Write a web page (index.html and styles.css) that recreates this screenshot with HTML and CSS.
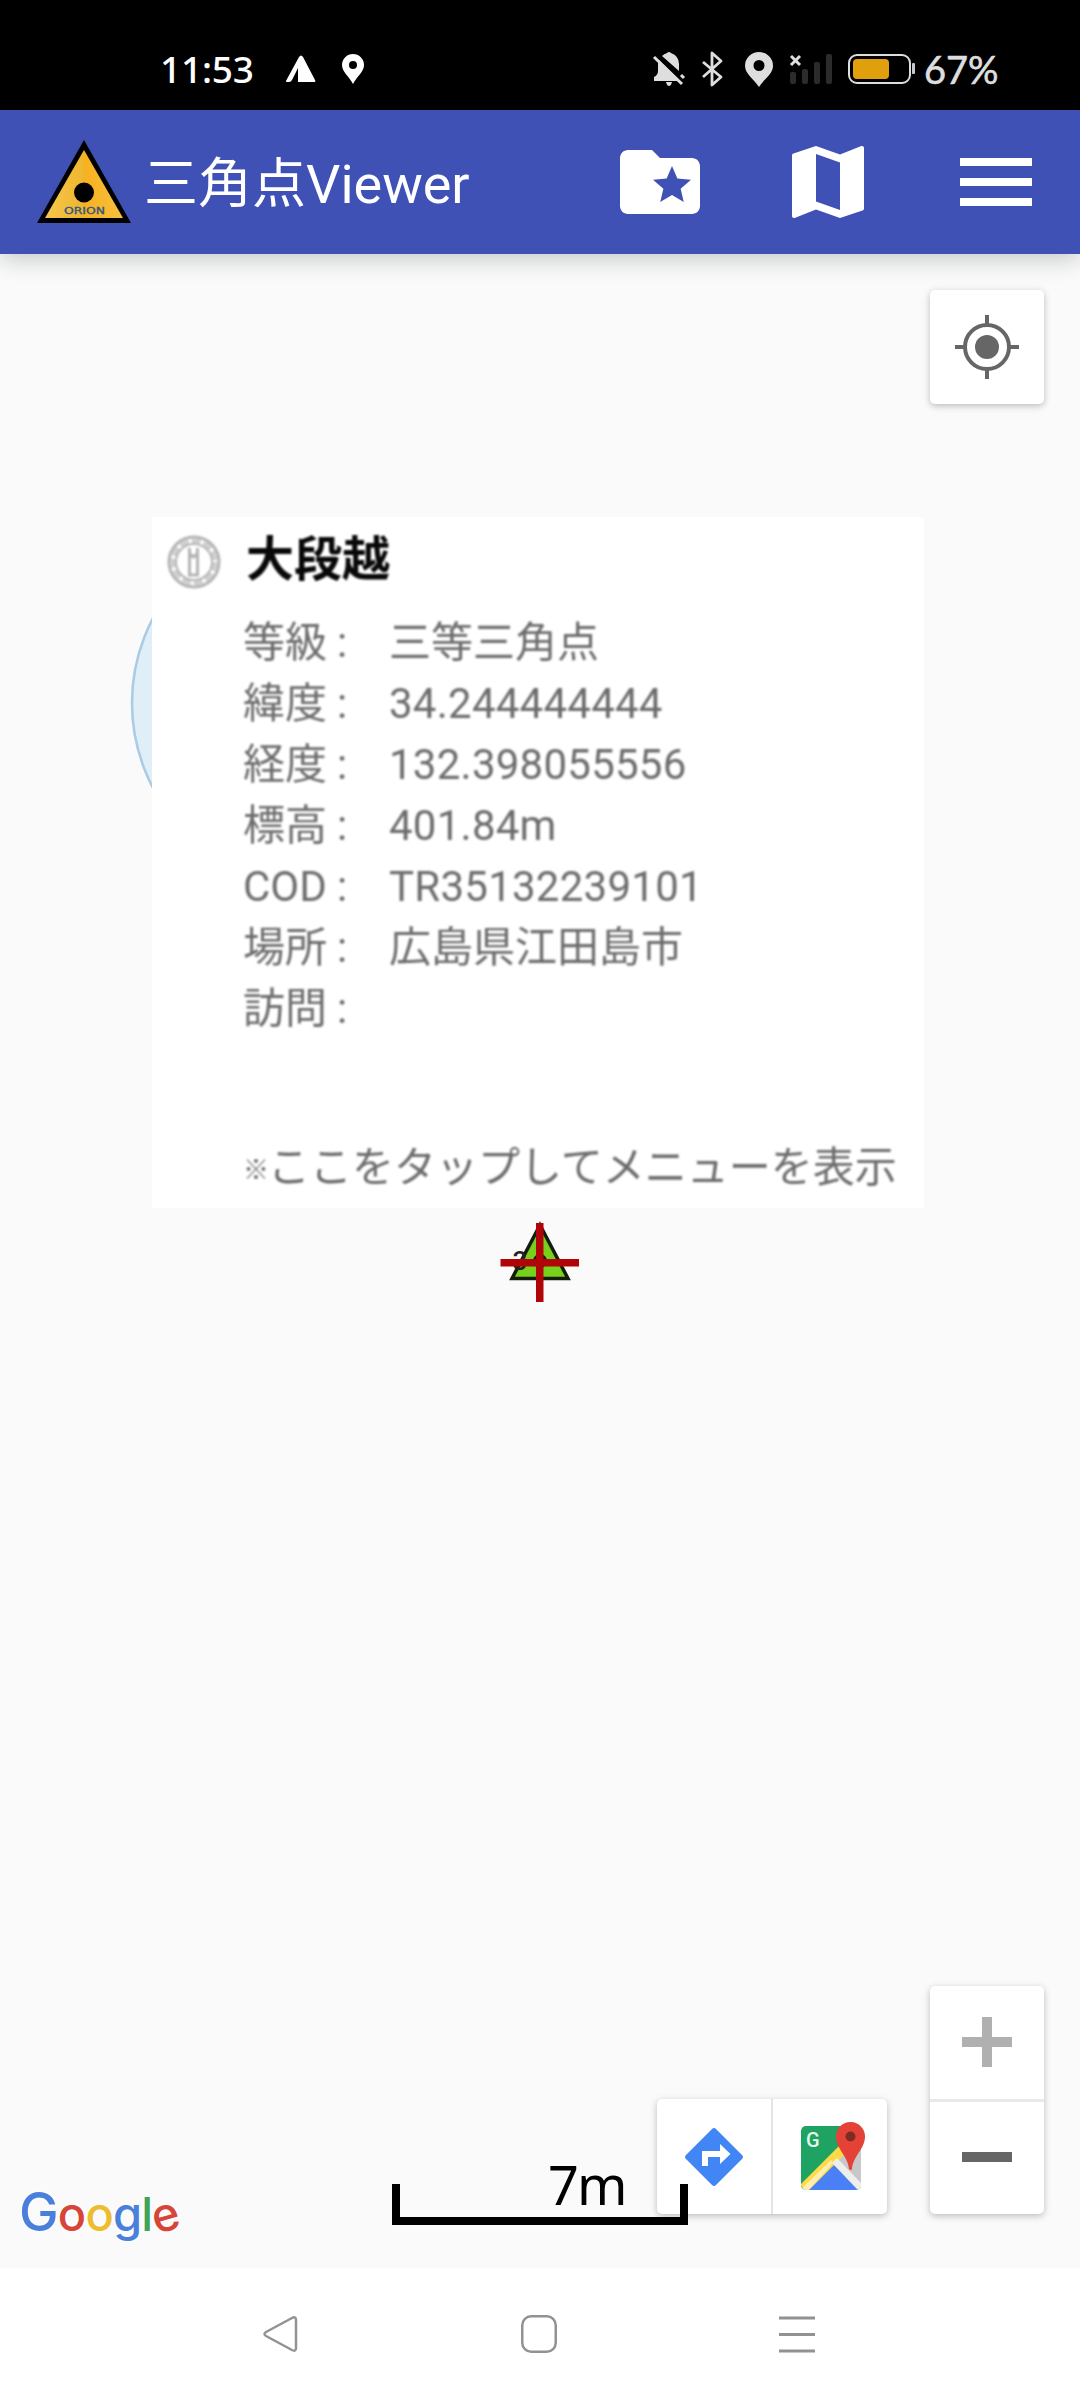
FILE: index.html
```html
<!DOCTYPE html>
<html lang="ja">
<head>
<meta charset="utf-8">
<title>三角点Viewer</title>
<link rel="stylesheet" href="styles.css">
</head>
<body>
<header class="status">
  <div class="status-side">
    <span class="clock">11:53</span>
    <svg class="ico-tent" width="32" height="28" viewBox="0 0 32 28"><path fill="#fff" d="M14 2Q16-1 18 2L30 25Q31 27 29 27H13V13L7 25Q6 27 4 27H2.500Q0 27 1.500 25Z"/></svg>
    <svg width="22" height="30" viewBox="0 0 22 30"><path fill="#fff" fill-rule="evenodd" d="M11 0A11 11 0 0 0 0 11C0 18 7 22 11 30C15 22 22 18 22 11A11 11 0 0 0 11 0ZM11 7a4 4 0 1 1 0 8a4 4 0 0 1 0-8Z"/></svg>
  </div>
  <div class="status-side">
    <svg width="32" height="34" viewBox="0 0 32 34"><path fill="#dedede" d="M13 30h6q-1 4-3 4t-3-4ZM1 29v-4q4-2 4-6v-7q0-2 1-4l21 21ZM9 4q2-2 5-3q2-2 4 0q8 3 8 11v7L9 4Z"/><path stroke="#000" stroke-width="3" d="M5 3l27 27"/><path stroke="#dedede" stroke-width="3" d="M1 5l28 27M28 23l3 3"/></svg>
    <svg class="ico-bt" width="22" height="34" viewBox="0 0 22 34"><path fill="none" stroke="#dedede" stroke-width="2.800" stroke-linejoin="round" d="M1 10l18 15l-9 8V1l9 8L1 25"/></svg>
    <svg class="ico-pin" width="28" height="35" viewBox="0 0 28 35"><path fill="#dedede" fill-rule="evenodd" d="M14 0A14 14 0 0 0 0 14C0 22 9 27 14 35C19 27 28 22 28 14A14 14 0 0 0 14 0ZM14 8a5.500 5.500 0 1 1 0 11a5.500 5.500 0 0 1 0-11Z"/></svg>
    <svg class="ico-signal" width="44" height="32" viewBox="0 0 44 32"><path stroke="#dedede" stroke-width="3" d="M2 3l9 9m0-9l-9 9"/><g fill="#2b2b2b"><rect x="1" y="19" width="6" height="12" rx="2"/><rect x="13" y="16" width="6" height="15" rx="2"/><rect x="25" y="9" width="6" height="22" rx="2"/><rect x="37" y="1" width="6" height="30" rx="2"/></g></svg>
    <svg class="ico-battery" width="68" height="32" viewBox="0 0 68 32"><rect x="1" y="2" width="61" height="28" rx="8" fill="none" stroke="#dedede" stroke-width="2"/><rect x="5" y="6" width="36" height="20" rx="4" fill="#e09f0c"/><rect x="64" y="10" width="3" height="11" rx="1" fill="#c8c8c8"/></svg>
    <span class="percent">67%</span>
  </div>
</header>

<nav class="appbar">
  <svg class="logo" width="96" height="84" viewBox="0 0 96 84">
    <defs><linearGradient id="gold"><stop offset="0" stop-color="#f6c64c"/><stop offset=".5" stop-color="#eeb62f"/><stop offset=".5" stop-color="#f8b01e"/><stop offset="1" stop-color="#f7c040"/></linearGradient></defs>
    <path d="M48 0L95 83H1Z"/><path fill="url(#gold)" d="M48 10L87 78H9Z"/>
    <circle cx="48" cy="52.500" r="10"/>
    <text class="logo-text" x="28" y="74" textLength="41" lengthAdjust="spacingAndGlyphs">ORION</text>
  </svg>
  <h1 class="title">三角点Viewer</h1>
  <div class="actions">
    <svg width="96" height="96" viewBox="0 0 24 24"><path fill="#fff" fill-rule="evenodd" d="M20 6h-8l-2-2H4c-1.100 0-2 .9-2 2v12c0 1.100.9 2 2 2h16c1.100 0 2-.9 2-2V8c0-1.100-.9-2-2-2zm-2.060 11L15 15.280 12.060 17l.78-3.330-2.590-2.240 3.410-.29L15 8l1.340 3.140 3.410.29-2.590 2.240.78 3.330z"/></svg>
    <svg width="96" height="96" viewBox="0 0 24 24"><path fill="#fff" fill-rule="evenodd" d="M20.500 3l-.16.030L15 5.100 9 3 3.360 4.900c-.21.070-.36.250-.36.480V20.500c0 .28.220.5.500.5l.16-.03L9 18.900l6 2.100 5.640-1.900c.21-.07.360-.25.360-.48V3.500c0-.28-.22-.5-.5-.5zM15 19l-6-2.110V5l6 2.110V19z"/></svg>
    <svg width="96" height="96" viewBox="0 0 24 24"><path fill="#fff" d="M3 18h18v-2H3v2zm0-5h18v-2H3v2zm0-7v2h18V6H3z"/></svg>
  </div>
</nav>

<main class="map">
  <svg class="accuracy" width="368" height="368" viewBox="0 0 368 368"><circle cx="184" cy="184" r="182" fill="#e0eef7" stroke="#a9cbe4" stroke-width="2.500"/></svg>

  <section class="popup">
    <svg class="medal" width="56" height="56" viewBox="0 0 56 56" fill="none" stroke="#b4b4b4"><circle cx="28" cy="28" r="25" stroke-width="3"/><circle cx="28" cy="28" r="21" stroke="#cfcfcf" stroke-width="5" stroke-dasharray="9 3"/><circle cx="28" cy="28" r="18" stroke-width="2"/><path stroke-width="3" d="M23.500 14v27h8V14M24 20l3.500 3l3.500-3"/></svg>
    <div class="info">
      <h2 class="name">大段越</h2>
      <dl class="facts">
        <dt>等級</dt><dd class="sep">:</dd><dd>三等三角点</dd>
        <dt>緯度</dt><dd class="sep">:</dd><dd class="num">34.244444444</dd>
        <dt>経度</dt><dd class="sep">:</dd><dd class="num">132.398055556</dd>
        <dt>標高</dt><dd class="sep">:</dd><dd class="num">401.84m</dd>
        <dt>COD</dt><dd class="sep">:</dd><dd class="num">TR35132239101</dd>
        <dt>場所</dt><dd class="sep">:</dd><dd>広島県江田島市</dd>
        <dt>訪問</dt><dd class="sep">:</dd><dd></dd>
      </dl>
      <p class="hint"><span class="kome">※</span>ここをタップしてメニューを表示</p>
    </div>
  </section>

  <svg class="marker" width="80" height="80" viewBox="0 0 80 80">
    <path d="M40 2L68 55.500H12Z" fill="#78d01c" stroke="#141c0c" stroke-width="3.500"/>
    <circle cx="40" cy="38" r="7" fill="#141c0c"/>
    <text class="marker-text" x="12.500" y="46.500">3</text>
    <path fill="#b00408" d="M36 0h7.500v79H36zM.5 36h78.500v7.500H.5z"/>
  </svg>

  <button class="card locate" aria-label="現在地"><svg width="64" height="64" viewBox="0 0 64 64"><circle cx="32" cy="32" r="12" fill="#666"/><circle cx="32" cy="32" r="22" fill="none" stroke="#666" stroke-width="4"/><path stroke="#666" stroke-width="4" d="M32 0v10M32 54v10M0 32h10M54 32h10"/></svg></button>

  <div class="card zoom">
    <button class="zoom-in" aria-label="拡大"><svg width="50" height="50" viewBox="0 0 50 50"><path fill="#b0b0b0" d="M20 0h10v20h20v10H30v20H20V30H0V20h20z"/></svg></button>
    <button class="zoom-out" aria-label="縮小"><svg width="50" height="50" viewBox="0 0 50 50"><path fill="#666" d="M0 20h50v10H0z"/></svg></button>
  </div>

  <div class="card tools">
    <button aria-label="経路"><svg width="60" height="60" viewBox="0 0 60 60"><path fill="#4285f4" d="M28 2Q30 0 32 2L58 28Q60 30 58 32L32 58Q30 60 28 58L2 32Q0 30 2 28Z"/><path fill="#fff" d="M18 39V24h18v-7l10.500 10L36 37v-7H24v9z"/></svg></button>
    <button aria-label="地図"><svg width="68" height="68" viewBox="0 0 68 68">
      <defs><clipPath id="tile"><rect x="4" y="8" width="60" height="64" rx="5"/></clipPath></defs>
      <g clip-path="url(#tile)"><path fill="#1ea362" d="M4 8h60v64H4z"/><path fill="#c8c8c8" d="M37 38L64 18v54H56z"/><path fill="#4a80f5" d="M6 75l28-31 30 31z"/><path fill="#ffda48" d="M3 67L42 28l6 8L10 74z"/><path fill="#fff" opacity=".55" d="M10 74L36 45l-2-3L4 71z"/><path fill="#eee" d="M35 45l5-5 27 28-5 5z"/></g>
      <path fill="#e44236" d="M54 4A14.500 14.500 0 0 0 39 18.500C39 31 51 38 52 51Q53.500 53 55 51C56 38 68 31 68 18.500A14.500 14.500 0 0 0 54 4Z"/><circle cx="53.500" cy="18.500" r="5" fill="#7f2b25"/>
      <text class="g-text" x="9" y="29">G</text></svg></button>
  </div>

  <div class="scale"><span>7m</span></div>
  <div class="google"><span class="b cap">G</span><span class="r">o</span><span class="y">o</span><span class="b">g</span><span class="g">l</span><span class="r tilt">e</span></div>
</main>

<footer class="navbar">
  <svg width="36" height="38" viewBox="0 0 36 38"><path fill="none" stroke="#929292" stroke-width="2.500" stroke-linejoin="round" d="M3 17L29 3Q33 1 33 5V33Q33 37 29 35L3 21Q0 19 3 17Z"/></svg>
  <svg width="36" height="38" viewBox="0 0 36 38"><rect x="1.250" y="1.250" width="33.500" height="35.500" rx="9" fill="none" stroke="#929292" stroke-width="2.500"/></svg>
  <svg width="36" height="38" viewBox="0 0 36 38"><path stroke="#929292" stroke-width="3" d="M0 3h36M0 19.500h36M0 36h36"/></svg>
</footer>
</body>
</html>
```
FILE: styles.css
```css
* { box-sizing: border-box; margin: 0; padding: 0; }

body {
  width: 1080px;
  height: 2400px;
  display: flex;
  flex-direction: column;
  overflow: hidden;
  font-family: Roboto, "Noto Sans CJK JP", sans-serif;
  background: #fafafa;
}

svg { display: block; flex: none; overflow: visible; }
button { border: 0; background: none; display: flex; align-items: center; justify-content: center; }

/* Status bar */
.status {
  height: 110px;
  flex: none;
  background: #000;
  display: flex;
  justify-content: space-between;
  padding: 28px 80px 0 160px;
}
.status-side { display: flex; align-items: center; height: 82px; }
.clock { width: 94px; color: #fff; font: 500 37px/40px "Noto Sans", sans-serif; letter-spacing: -.2px; }
.ico-tent { margin: 0 25px 0 31px; }
.percent { width: 76px; margin-left: 8px; color: #dedede; font: 400 38px/40px Lato, sans-serif; white-space: nowrap; -webkit-text-stroke: .6px #dedede; }
.ico-bt { margin-left: 17px; }
.ico-pin { margin-left: 21px; }
.ico-signal { margin-left: 16px; }
.ico-battery { margin-left: 15px; }

/* App bar */
.appbar {
  height: 144px;
  flex: none;
  position: relative;
  z-index: 1;
  background: #3f51b5;
  display: flex;
  align-items: center;
  padding: 0 36px;
  box-shadow: 0 6px 22px rgba(0, 20, 20, .2);
}
.logo-text { font: 400 9px "DejaVu Sans", sans-serif; fill: #2f557f; stroke: #2f557f; stroke-width: .3px; }
.title { margin: 5px 0 0 12px; font-size: 54px; line-height: 80px; font-weight: 400; color: #fff; white-space: nowrap; }
.actions { display: flex; gap: 72px; margin-left: auto; }

/* Map canvas */
.map { position: relative; flex: 1; background: #fafafa; }
.accuracy { position: absolute; left: 130px; top: 265px; }
.marker { position: absolute; left: 500px; top: 969px; }
.marker-text { font: 500 26px Roboto, sans-serif; fill: #222; }

.popup {
  position: absolute;
  left: 152px;
  top: 263px;
  width: 772px;
  height: 691px;
  padding: 10px 16px 0 14px;
  background: #fff;
  display: flex;
  color: #6c6c6c;
}
.popup > * { filter: blur(1.2px); }
.medal { margin-top: 7px; }
.info { margin-left: 21px; flex: 1; }
.name { height: 74px; padding: 2px 0 0 3px; font-size: 48px; line-height: 62px; font-weight: 700; color: #080808; }
.facts {
  display: grid;
  grid-template-columns: 94px 52px 1fr;
  grid-auto-rows: 61px;
  margin-top: 11px;
  font-size: 42px;
  line-height: 61px;
}
.num { letter-spacing: .25px; }
.hint { margin-top: 98px; font-size: 42px; line-height: 61px; white-space: nowrap; }
.kome { display: inline-block; width: 25px; font-size: 26px; font-weight: 700; vertical-align: 3px; line-height: 30px; }

.card { position: absolute; background: #fff; border-radius: 5px; box-shadow: 0 2px 7px rgba(0, 0, 0, .25); }
.locate { right: 36px; top: 36px; width: 114px; height: 114px; }
.zoom { right: 36px; top: 1732px; width: 114px; height: 228px; display: flex; flex-direction: column; }
.zoom button { flex: 1; }
.zoom-in { border-bottom: 3px solid #e9e9e9; }
.zoom-out svg { margin-top: -1px; }
.tools { left: 657px; top: 1845px; width: 230px; height: 115px; display: flex; }
.tools button { flex: 1; }
.tools button + button { border-left: 2px solid #e4e4e4; }
.tools button + button svg { margin: -9px 0 0 1px; }
.g-text { font: 500 20px Roboto, sans-serif; fill: #e6f5ec; }

.scale {
  position: absolute;
  left: 392px;
  top: 1930px;
  width: 296px;
  height: 41px;
  border: 8px solid #000;
  border-top: 0;
}
.scale span { display: block; margin: -33px 0 0 148px; font: 54px/66px "Noto Sans", sans-serif; letter-spacing: -2px; color: #000; }

.google { position: absolute; left: 19px; top: 1926px; font: 500 47px/65px Inter, sans-serif; letter-spacing: -.8px; white-space: nowrap; text-shadow: 0 0 5px #fff; }
.cap { font-size: 53px; }
.tilt { display: inline-block; transform: rotate(-16deg); transform-origin: 50% 56%; }
.b { color: #4a7fdb; }
.r { color: #d64538; }
.y { color: #edbd2f; }
.g { color: #3fa359; }

/* System navigation */
.navbar {
  height: 132px;
  flex: none;
  background: #fff;
  display: flex;
  justify-content: space-between;
  align-items: center;
  padding: 0 265px 0 263px;
}
```
